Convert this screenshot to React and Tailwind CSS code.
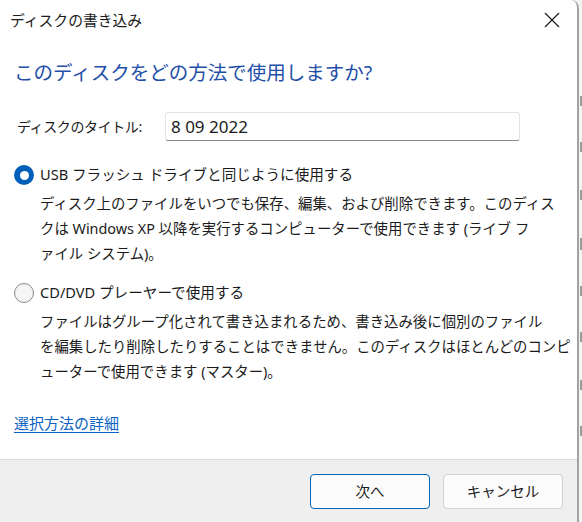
function Radio({ checked }) {
  if (checked) {
    return (
      <span className="w-[20px] h-[20px] rounded-full bg-[#005fb8] flex items-center justify-center shrink-0">
        <span className="w-[9px] h-[9px] rounded-full bg-white" />
      </span>
    );
  }
  return <span className="w-[20px] h-[20px] rounded-full border border-[#8a8a8a] bg-[#f5f5f5] shrink-0" />;
}

function Option({ checked, label, lines, className }) {
  return (
    <div className={className}>
      <div className="flex items-center gap-[6px] h-[24px]">
        <Radio checked={checked} />
        <span className="text-[14.6px] text-[#1b1b1b] whitespace-nowrap">{label}</span>
      </div>
      <div className="pl-[26px] text-[14.4px] leading-[25px] text-[#1b1b1b] mt-[4px]">
        {lines.map((l) => (
          <div key={l} className="whitespace-nowrap">
            {l}
          </div>
        ))}
      </div>
    </div>
  );
}

function App() {
  return (
    <div
      className="w-[582px] h-[522px] flex bg-[#f4f4f4] overflow-hidden"
      style={{ fontFamily: '"Noto Sans", "Noto Sans CJK JP", sans-serif' }}
    >
      <div className="w-[579px] h-full flex flex-col bg-white border-r-2 border-[#a3a3a3] rounded-tr-[8px] shrink-0">
        {/* title bar */}
        <div className="h-[40px] flex items-center justify-between pl-[10px] pr-[17px] shrink-0">
          <span className="text-[14.8px] text-[#1b1b1b]">ディスクの書き込み</span>
          <svg width="16" height="16" viewBox="0 0 16 16" className="mt-[-1px]">
            <path d="M1 1 L15 15 M15 1 L1 15" stroke="#1b1b1b" strokeWidth="1.2" />
          </svg>
        </div>

        {/* content */}
        <div className="flex-1 pl-[14px]">
          <h1 className="mt-[20px] text-[19.5px] leading-[26px] text-[#1f4fa8] whitespace-nowrap">
            このディスクをどの方法で使用しますか?
          </h1>

          <div className="mt-[26px] flex items-center pl-[3px]">
            <span className="w-[148px] text-[14px] tracking-[-0.4px] text-[#1b1b1b] whitespace-nowrap">
              ディスクのタイトル:
            </span>
            <div className="w-[355px] h-[29px] border border-[#e3e3e3] border-b-[#8a8a8a] rounded-[3px] flex items-center pl-[5px] text-[17px] text-[#1b1b1b]">
              8 09 2022
            </div>
          </div>

          <Option
            className="mt-[22px]"
            checked
            label="USB フラッシュ ドライブと同じように使用する"
            lines={[
              "ディスク上のファイルをいつでも保存、編集、および削除できます。このディス",
              "クは Windows XP 以降を実行するコンピューターで使用できます (ライブ フ",
              "ァイル システム)。",
            ]}
          />

          <Option
            className="mt-[15px]"
            label="CD/DVD プレーヤーで使用する"
            lines={[
              "ファイルはグループ化されて書き込まれるため、書き込み後に個別のファイル",
              "を編集したり削除したりすることはできません。このディスクはほとんどのコンピ",
              "ューターで使用できます (マスター)。",
            ]}
          />

          <a className="block mt-[28px] w-fit text-[15px] text-[#0b63c4] underline underline-offset-[3px]">
            選択方法の詳細
          </a>
        </div>

        {/* footer */}
        <div className="h-[63px] shrink-0 bg-[#efefef] border-t border-[#dadada] flex justify-end items-start pt-[14px] pr-[14px] gap-[13px]">
          <button className="w-[120px] h-[35px] rounded-[4px] bg-[#fbfbfb] border border-[#0067c0] text-[14.5px] text-[#1b1b1b]">
            次へ
          </button>
          <button className="w-[120px] h-[35px] rounded-[4px] bg-[#fbfbfb] border border-[#d0d0d0] text-[14.5px] text-[#1b1b1b]">
            キャンセル
          </button>
        </div>
      </div>

      {/* edge of the window behind, only slivers of its text show */}
      <div className="flex-1 flex flex-col pt-[96px] pl-[1px]">
        <span className="w-[2px] h-[10px] bg-[#9a9a9a]" />
        <span className="w-[2px] h-[10px] bg-[#9a9a9a] mt-[36px]" />
        <span className="w-[2px] h-[10px] bg-[#9a9a9a] mt-[38px]" />
        <span className="w-[2px] h-[12px] bg-[#9a9a9a] mt-[38px]" />
        <span className="w-[2px] h-[10px] bg-[#9a9a9a] mt-[36px]" />
        <span className="w-[2px] h-[10px] bg-[#9a9a9a] mt-[36px]" />
        <span className="w-[2px] h-[10px] bg-[#9a9a9a] mt-[38px]" />
        <span className="w-[2px] h-[10px] bg-[#9a9a9a] mt-[36px]" />
      </div>
    </div>
  );
}

export default App;
